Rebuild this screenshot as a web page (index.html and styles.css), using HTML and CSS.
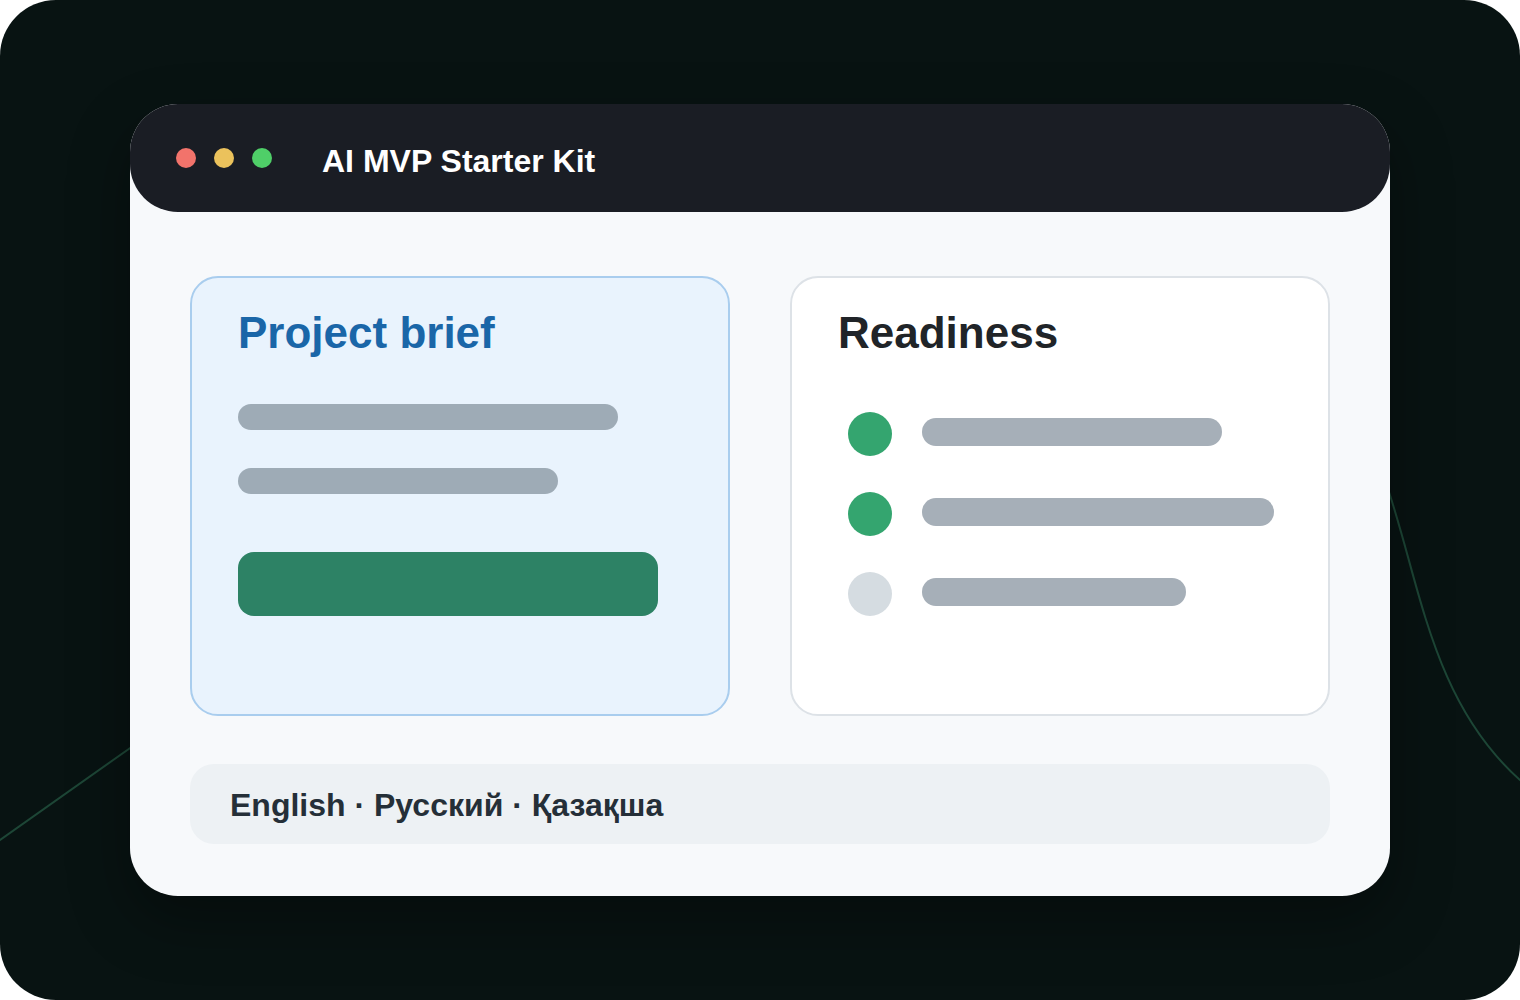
FILE: index.html
```html
<!DOCTYPE html>
<html lang="en">
<head>
<meta charset="utf-8">
<title>AI MVP Starter Kit</title>
<link rel="stylesheet" href="styles.css">
</head>
<body>
<div class="frame">
  <svg class="wave" width="1520" height="1000" viewBox="0 0 1520 1000" aria-hidden="true">
    <path d="M-10 847 L150 734 C500 400 1300 250 1385 480 C1420 580 1430 700 1520 780 L1560 805" fill="none" stroke="#1d4636" stroke-width="2"/>
  </svg>
  <div class="window">
    <header class="titlebar">
      <div class="lights">
        <span class="light red"></span>
        <span class="light yellow"></span>
        <span class="light green"></span>
      </div>
      <h1 class="app-title">AI MVP Starter Kit</h1>
    </header>
    <main class="content">
      <div class="cards">
        <section class="card card-brief">
          <h2 class="card-title brief-title">Project brief</h2>
          <div class="bar bar-1"></div>
          <div class="bar bar-2"></div>
          <div class="cta"></div>
        </section>
        <section class="card card-ready">
          <h2 class="card-title ready-title">Readiness</h2>
          <ul class="checklist">
            <li class="check-row"><span class="dot done"></span><span class="line line-1"></span></li>
            <li class="check-row"><span class="dot done"></span><span class="line line-2"></span></li>
            <li class="check-row"><span class="dot todo"></span><span class="line line-3"></span></li>
          </ul>
        </section>
      </div>
      <div class="langbar">English · Русский · Қазақша</div>
    </main>
  </div>
</div>
</body>
</html>
```

FILE: styles.css
```css
* { box-sizing: border-box; }
html, body { margin: 0; padding: 0; background: #ffffff; }
body { font-family: "Liberation Sans", Arial, "Noto Sans", sans-serif; }

.frame {
  position: relative;
  width: 1520px;
  height: 1000px;
  background: #081312;
  border-radius: 56px;
  overflow: hidden;
  padding: 104px 130px;
}

.wave {
  position: absolute;
  left: 0;
  top: 0;
}

.window {
  position: relative;
  width: 1260px;
  height: 792px;
  background: #f7f9fb;
  border-radius: 48px;
  box-shadow: 0 24px 60px rgba(0, 0, 0, 0.35);
  display: flex;
  flex-direction: column;
}

.titlebar {
  height: 108px;
  background: #1a1d24;
  border-radius: 48px;
  display: flex;
  align-items: center;
  padding-left: 46px;
  flex-shrink: 0;
}

.lights { display: flex; gap: 18px; }
.light { width: 20px; height: 20px; border-radius: 50%; display: block; }
.light.red { background: #f2736b; }
.light.yellow { background: #ebc25c; }
.light.green { background: #4fcf68; }

.app-title {
  margin: 0 0 0 50px;
  color: #ffffff;
  font-size: 32px;
  font-weight: 700;
  line-height: 1;
  padding-top: 6px;
}

.content {
  flex: 1;
  padding: 64px 60px 52px;
  display: flex;
  flex-direction: column;
  gap: 48px;
}

.cards {
  display: grid;
  grid-template-columns: 540px 540px;
  gap: 60px;
  height: 440px;
}

.card {
  border-radius: 28px;
  border: 2px solid;
  padding: 33px 46px;
  display: flex;
  flex-direction: column;
  align-items: flex-start;
}

.card-brief { background: #e9f3fd; border-color: #a9cdee; }
.card-ready { background: #ffffff; border-color: #dde2e7; }

.card-title {
  margin: 0;
  font-size: 44px;
  line-height: 44px;
  font-weight: 700;
}
.brief-title { color: #1a66a8; }
.ready-title { color: #202428; }

.bar { height: 26px; border-radius: 13px; background: #9eabb6; }
.bar-1 { width: 380px; margin-top: 49px; }
.bar-2 { width: 320px; margin-top: 38px; }
.cta { width: 420px; height: 64px; border-radius: 16px; background: #2d8265; margin-top: 58px; }

.checklist {
  list-style: none;
  margin: 57px 0 0 10px;
  padding: 0;
  display: flex;
  flex-direction: column;
  gap: 36px;
}
.check-row { display: flex; align-items: center; gap: 30px; height: 44px; }
.dot { width: 44px; height: 44px; border-radius: 50%; display: block; flex-shrink: 0; }
.dot.done { background: #34a56f; }
.dot.todo { background: #d5dce1; }
.line { height: 28px; border-radius: 14px; background: #a6afb8; display: block; margin-bottom: 4px; }
.line-1 { width: 300px; }
.line-2 { width: 352px; }
.line-3 { width: 264px; }

.langbar {
  height: 80px;
  border-radius: 24px;
  background: #edf1f4;
  display: flex;
  align-items: center;
  padding-left: 40px;
  padding-top: 2px;
  font-size: 32px;
  font-weight: 700;
  color: #252f38;
}
```
